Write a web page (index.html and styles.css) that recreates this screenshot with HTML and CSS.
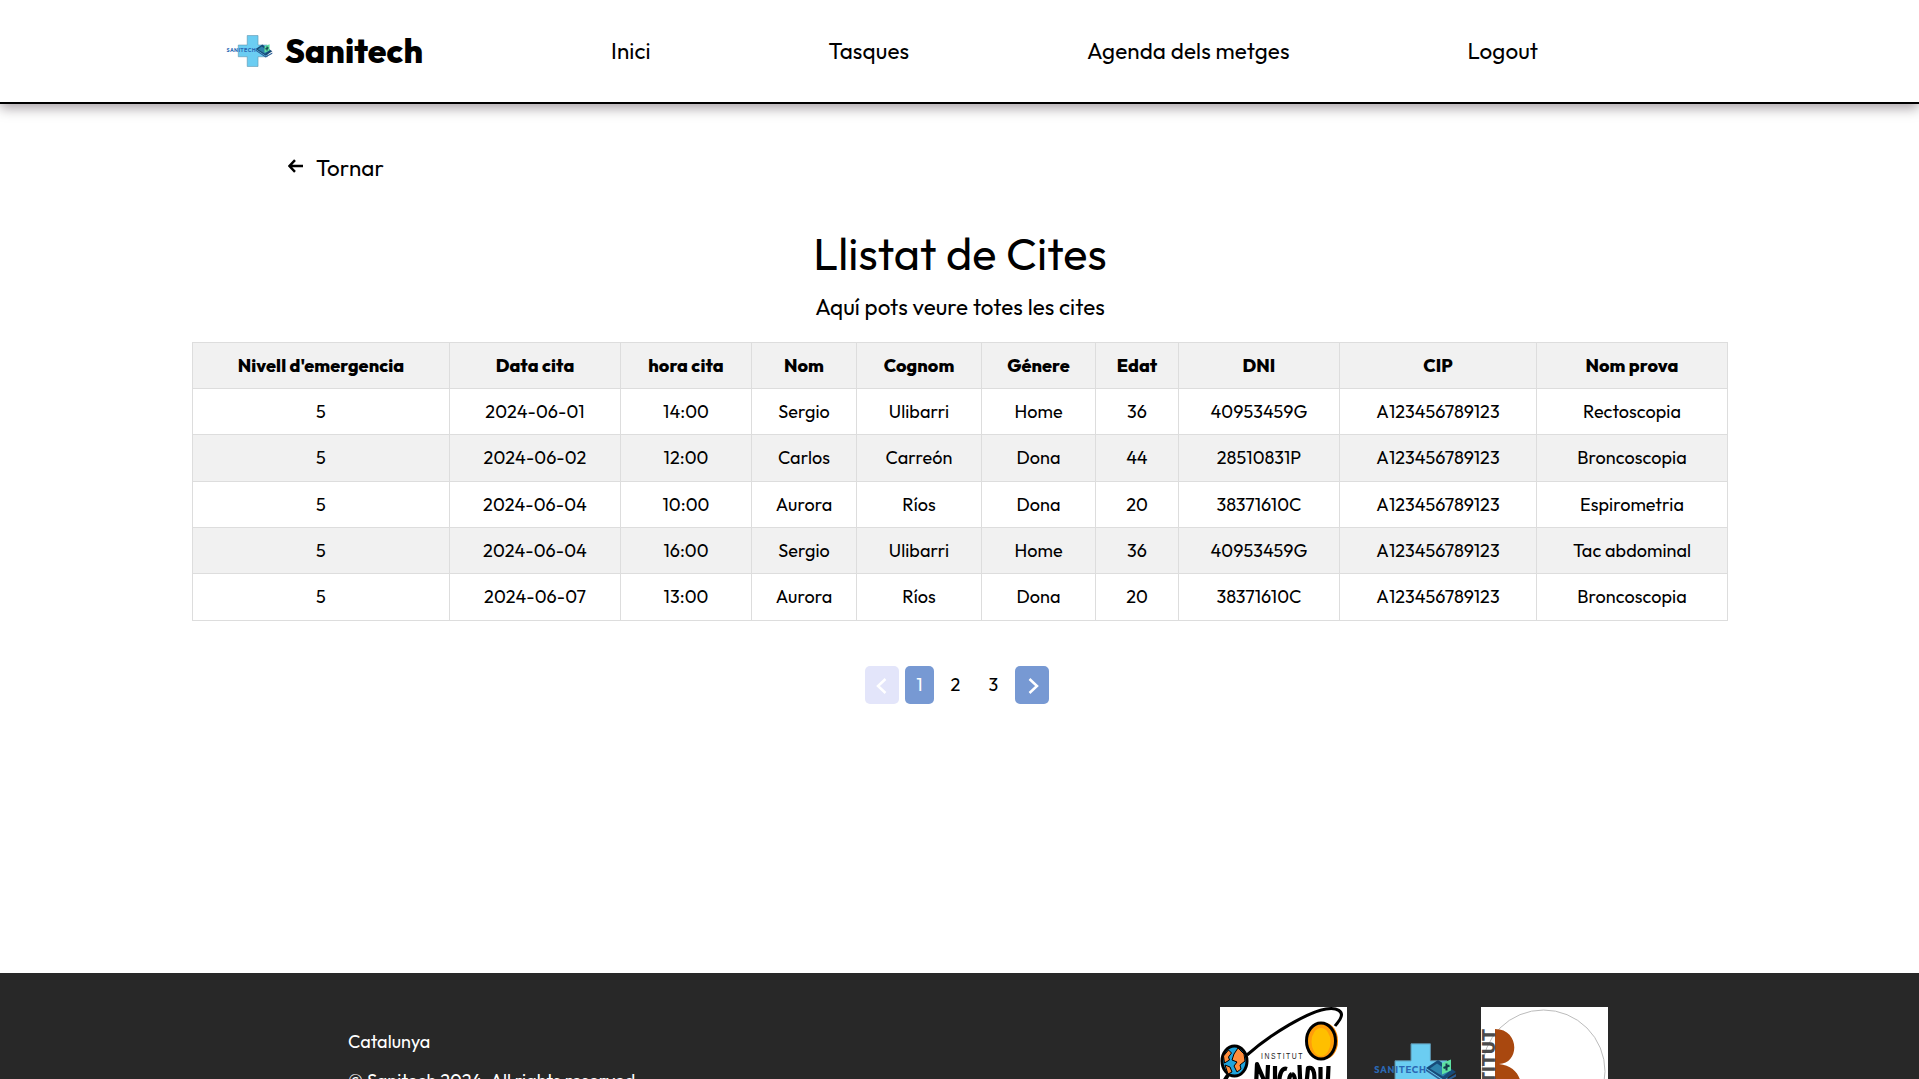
FILE: index.html
```html
<!DOCTYPE html>
<html lang="ca">
<head>
<meta charset="utf-8">
<title>Sanitech - Llistat de Cites</title>
<link rel="stylesheet" href="styles.css">
</head>
<body>
<svg class="defs" aria-hidden="true">
  <symbol id="sanitech" viewBox="6 36 86 57">
    <path d="M44 36.800h19.400v17H80v21H63.400v17.400H44V74.800H28v-21h16z" fill="#6bcdf2" stroke="#5a8fa8" stroke-width="1"/>
    <text x="7" y="65.700" class="logo-text" textLength="52">SANITECH</text>
    <path d="M59 61l12-8 18 12-12 8z" fill="#174a78"/>
    <path d="M63 61.500l7-5 12 8-6 5z" fill="#2d83ad"/>
    <path d="M59 62l18 12 12-7v2.500L77 76 59 64z" fill="#2a5d94"/>
    <path d="M75 56l9-3.500v11L75 67.500z" fill="#5ee0a2"/>
    <path d="M79.500 56.500v7M76.500 61l6-2.500" stroke="#123a4c" stroke-width="2"/>
  </symbol>
</svg>
<header class="site-header">
  <a class="brand"><svg class="brand-logo"><use href="#sanitech"/></svg><span class="brand-name">Sanitech</span></a>
  <nav class="menu"><a>Inici</a><a>Tasques</a><a>Agenda dels metges</a><a>Logout</a></nav>
</header>
<main>
  <a class="back"><svg class="back-icon" viewBox="0 0 16 14"><path d="M15 7H1.600M7 1.200L1.400 7 7 12.800"/></svg><span>Tornar</span></a>
  <h1>Llistat de Cites</h1>
  <p class="lead">Aquí pots veure totes les cites</p>
  <table>
    <colgroup><col class="c-level"><col class="c-date"><col class="c-hour"><col class="c-name"><col class="c-surname"><col class="c-gender"><col class="c-age"><col class="c-dni"><col class="c-cip"><col class="c-test"></colgroup>
    <thead><tr><th>Nivell d'emergencia</th><th>Data cita</th><th>hora cita</th><th>Nom</th><th>Cognom</th><th>Génere</th><th>Edat</th><th>DNI</th><th>CIP</th><th>Nom prova</th></tr></thead>
    <tbody>
      <tr><td>5</td><td>2024-06-01</td><td>14:00</td><td>Sergio</td><td>Ulibarri</td><td>Home</td><td>36</td><td>40953459G</td><td>A123456789123</td><td>Rectoscopia</td></tr>
      <tr><td>5</td><td>2024-06-02</td><td>12:00</td><td>Carlos</td><td>Carreón</td><td>Dona</td><td>44</td><td>28510831P</td><td>A123456789123</td><td>Broncoscopia</td></tr>
      <tr><td>5</td><td>2024-06-04</td><td>10:00</td><td>Aurora</td><td>Ríos</td><td>Dona</td><td>20</td><td>38371610C</td><td>A123456789123</td><td>Espirometria</td></tr>
      <tr><td>5</td><td>2024-06-04</td><td>16:00</td><td>Sergio</td><td>Ulibarri</td><td>Home</td><td>36</td><td>40953459G</td><td>A123456789123</td><td>Tac abdominal</td></tr>
      <tr><td>5</td><td>2024-06-07</td><td>13:00</td><td>Aurora</td><td>Ríos</td><td>Dona</td><td>20</td><td>38371610C</td><td>A123456789123</td><td>Broncoscopia</td></tr>
    </tbody>
  </table>
  <div class="pagination">
    <a class="page arrow disabled"><svg viewBox="0 0 11 16"><path d="M9.500 1L2 8l7.500 7"/></svg></a>
    <a class="page active">1</a><a class="page second">2</a><a class="page third">3</a>
    <a class="page arrow next"><svg viewBox="0 0 11 16"><path d="M1.500 1L9 8l-7.500 7"/></svg></a>
  </div>
</main>
<footer>
  <div class="legal"><p>Catalunya</p><p>© Sanitech 2024. All rights reserved</p></div>
  <div class="partners">
    <svg class="partner" viewBox="0 0 127 127">
      <rect width="127" height="127" fill="#fff"/>
      <path d="M27 48C52 26 88 5 106 2c12-2 17 3 15 8-1 4-4 6-6 9" fill="none" stroke="#000" stroke-width="3"/>
      <ellipse cx="105" cy="34" rx="13" ry="18" fill="#ff8a00"/>
      <ellipse cx="101" cy="34" rx="14.500" ry="18" fill="#ff9d0a" stroke="#000" stroke-width="3"/>
      <ellipse cx="101" cy="35" rx="9.500" ry="14" fill="#ffbf00"/>
      <ellipse cx="14.500" cy="54" rx="12.500" ry="15" fill="#1fa4dc" stroke="#000" stroke-width="3"/>
      <path d="M14 47l4-6 6 6 1 7-5 4 1 4-4 3-3-6 3-4-5-2z" fill="#ff8d3c" stroke="#000" stroke-width="1"/>
      <path d="M3.500 49l5-6 3 3-3 4 1 3-5 3zM5 58l5 2 2 5-4 2z" fill="#ff8d3c" stroke="#000" stroke-width="1"/>
      <path d="M8 68L3 76" stroke="#000" stroke-width="4"/>
      <text x="41" y="52" class="copernic-small" textLength="43" lengthAdjust="spacingAndGlyphs">INSTITUT</text>
      <g fill="none" stroke="#000" stroke-width="4.200" stroke-linejoin="round"><path d="M36 80l1-23 10 23 1-22M55 59v21M67 62c-6-2-9 8-7 20M72 67c-4 2-4 15 0 15s4-14 0-15M79.500 58l1 24M86 82l2-21c7-2 7 8 6 21M100.500 60v21M108.500 59l-1 23"/></g>
    </svg>
    <svg class="partner-sanitech"><use href="#sanitech"/></svg>
    <svg class="partner" viewBox="0 0 127 127">
      <rect width="127" height="127" fill="#fff"/>
      <circle cx="62.500" cy="64.500" r="61.500" fill="none" stroke="#bcbcbc"/>
      <path d="M14 22c25 0 25 34.500 4 35 32 3 28 48-4 48z" fill="#a9480f"/>
      <text transform="translate(13.500 89) rotate(-90)" class="bosc-text" textLength="67">STITUT</text>
    </svg>
  </div>
</footer>
</body>
</html>
```
FILE: styles.css
```css
* { box-sizing: border-box; }
body {
  display: flex;
  flex-direction: column;
  height: 100vh;
  margin: 0;
  overflow: hidden;
  background: #fff;
  color: #000;
  font: 18px/1.26 Outfit, Lato, sans-serif;
  letter-spacing: .07px;
}
h1, p { margin: 0; font-weight: 400; }
.defs { display: none; }
.site-header {
  display: flex;
  flex: none;
  align-items: center;
  height: 104px;
  padding-left: 226px;
  border-bottom: 2px solid #000;
  box-shadow: 0 4px 12px rgba(20, 0, 15, .38);
}
.brand { display: flex; align-items: center; gap: 11px; width: 385px; }
.brand-logo { width: 48px; height: 32px; }
.brand-name { font-size: 33.600px; font-weight: 800; }
.logo-text { font: 700 9.500px Outfit, sans-serif; fill: #2b68b4; }
.menu { display: flex; gap: 177.900px; font-size: 22.400px; letter-spacing: .12px; }
main { display: flex; flex: none; flex-direction: column; align-items: center; height: 869px; padding-top: 50px; }
.back { display: flex; align-self: flex-start; align-items: center; gap: 12px; margin-left: 288px; font-size: 22.400px; }
.back-icon { width: 16px; height: 14px; margin-bottom: 4px; fill: none; stroke: #000; stroke-width: 2.500; }
h1 { margin-top: 44px; padding-left: 1px; font-size: 45px; letter-spacing: .1px; }
.lead { margin-top: 10px; padding-left: 1px; font-size: 22.400px; }
table { width: 1536px; margin-top: 20.600px; table-layout: fixed; border-collapse: collapse; text-align: center; }
th, td { height: 46.330px; padding: 1px 0 0 1px; border: 1px solid #ddd; }
th { font-weight: 800; }
th, tbody tr:nth-child(even) { background: #f1f1f1; }
.c-level { width: 257px; }
.c-date { width: 171px; }
.c-hour { width: 131px; }
.c-name { width: 105px; }
.c-surname { width: 125px; }
.c-gender { width: 114px; }
.c-age { width: 83px; }
.c-dni { width: 161px; }
.c-cip { width: 197px; }
.c-test { width: 191px; }
.pagination { display: flex; gap: 6px; margin-top: 45.400px; padding-right: 5px; }
.page { display: flex; align-items: center; justify-content: center; width: 29px; height: 38px; padding-top: 1px; border-radius: 5px; }
.second { width: 31px; }
.third { width: 32px; padding-left: 1px; }
.active, .arrow { background: #7799d3; color: #fff; }
.arrow { width: 34px; padding-right: 2px; }
.next { padding: 1px 0 0 2px; }
.arrow svg { width: 11px; height: 16px; fill: none; stroke: #fff; stroke-width: 2.500; }
.disabled { background: #e3e5fa; }
footer {
  display: flex;
  flex: none;
  justify-content: space-between;
  height: 220px;
  padding: 34px 311px 0 348px;
  background: #282828;
  color: #fff;
}
.legal { display: grid; gap: 16px; align-content: start; padding-top: 24px; }
.partners { display: flex; align-items: flex-start; }
.partner { width: 127px; height: 127px; }
.partner-sanitech { width: 86px; height: 57px; margin: 36px 22px 0 26px; }
.copernic-small { font: 400 9px "Liberation Sans", Arial, sans-serif; letter-spacing: 2px; fill: #222; }
.bosc-text { font: 700 17px "DejaVu Sans", sans-serif; fill: #4b4b4b; }
```
